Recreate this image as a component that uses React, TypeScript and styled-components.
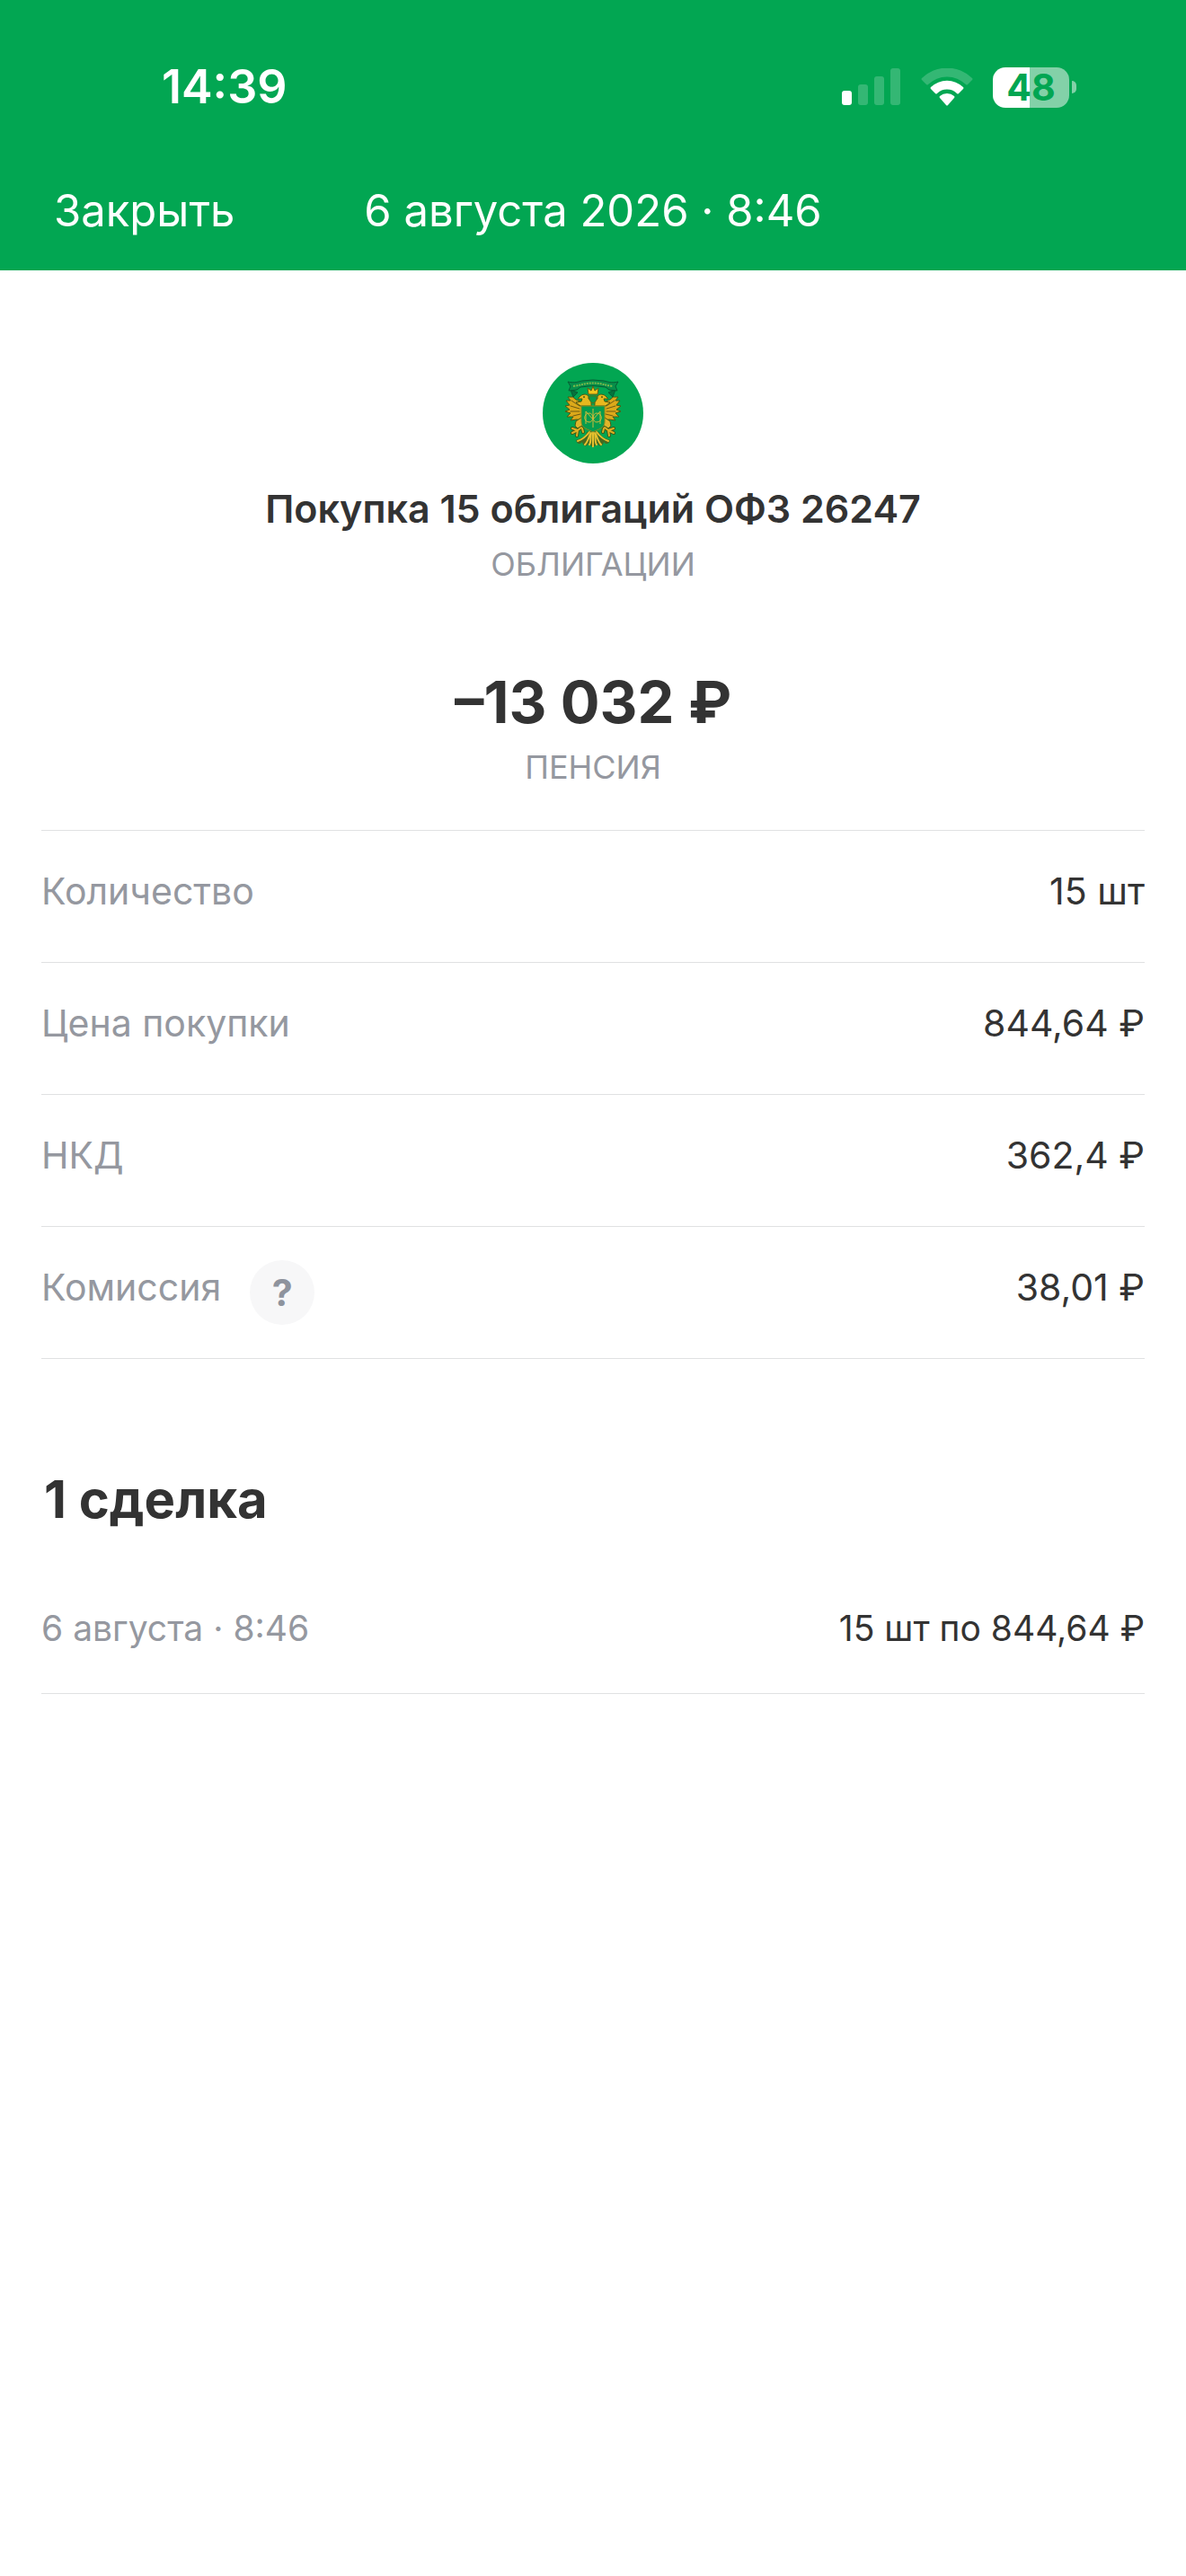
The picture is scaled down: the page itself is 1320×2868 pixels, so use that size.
import React from "react";
import styled, { createGlobalStyle } from "styled-components";

const green = "#02a652";
const ink = "#333333";
const muted = "#9598a0";
const line = "#e0e1e2";

const GlobalStyle = createGlobalStyle`
  * { box-sizing: border-box; }
  body {
    margin: 0;
    background: #ffffff;
    color: ${ink};
    font-family: Inter, "Noto Sans", sans-serif;
  }
`;

const Header = styled.header`
  background: ${green};
  color: #ffffff;
`;

const StatusBar = styled.div`
  display: flex;
  align-items: center;
  justify-content: space-between;
  padding: 72px 122px 0 180px;
`;

const Clock = styled.time`
  font-size: 52px;
  line-height: 50px;
  font-weight: 600;
`;

const StatusIcons = styled.div`
  display: flex;
  align-items: center;
  gap: 22px;
`;

const NavBar = styled.nav`
  display: grid;
  grid-template-columns: 1fr auto 1fr;
  align-items: center;
  padding: 83px 60px 36px;
`;

const CloseButton = styled.button`
  justify-self: start;
  padding: 0;
  border: 0;
  background: none;
  color: inherit;
  font: inherit;
  font-size: 49px;
  line-height: 60px;
  cursor: pointer;
`;

const NavTitle = styled.span`
  font-size: 49px;
  line-height: 60px;
`;

const Content = styled.main`
  padding: 103px 46px 0;
`;

const Summary = styled.section`
  display: flex;
  flex-direction: column;
  align-items: center;
  text-align: center;
  padding-bottom: 48px;
`;

const OperationName = styled.h1`
  margin: 24px 0 14px;
  font-size: 43px;
  line-height: 52px;
  font-weight: 600;
`;

const Caption = styled.p`
  margin: 0;
  color: ${muted};
  font-size: 36px;
  line-height: 44px;
`;

const Amount = styled.p`
  margin: 92px 0 10px;
  font-size: 65px;
  line-height: 80px;
  font-weight: 700;
`;

const Details = styled.dl`
  margin: 0;
  border-bottom: 1px solid ${line};
`;

const DetailRow = styled.div`
  display: flex;
  justify-content: space-between;
  padding: 37px 0 49px;
  border-top: 1px solid ${line};
  font-size: 41px;
  line-height: 60px;
`;

const Term = styled.dt`
  display: flex;
  align-items: flex-start;
  gap: 32px;
  color: ${muted};
`;

const Value = styled.dd`
  margin: 0;
`;

const HelpButton = styled.button`
  width: 72px;
  height: 72px;
  margin-bottom: -12px;
  padding: 0;
  border: 0;
  border-radius: 50%;
  background: #f7f7f8;
  color: #8e939d;
  font: inherit;
  font-size: 41px;
  line-height: 72px;
  font-weight: 700;
  cursor: pointer;
`;

const DealsTitle = styled.h2`
  margin: 120px 0 0;
  padding-left: 3px;
  font-size: 58px;
  line-height: 72px;
  font-weight: 700;
`;

const DealList = styled.ul`
  margin: 36px 0 0;
  padding: 48px 0 0;
  list-style: none;
`;

const DealRow = styled.li`
  display: flex;
  justify-content: space-between;
  padding-bottom: 48px;
  border-bottom: 1px solid ${line};
  font-size: 39px;
  line-height: 48px;
`;

const DealDate = styled.time`
  color: ${muted};
`;

const BatteryFrame = styled.div`
  display: flex;
  align-items: center;
  gap: 3px;
`;

const BatteryBody = styled.div`
  width: 85px;
  height: 45px;
  border-radius: 14px;
  background: linear-gradient(90deg, #ffffff 48%, #83d1a8 48%);
  color: ${green};
  font-size: 41px;
  line-height: 45px;
  font-weight: 700;
  text-align: center;
`;

const BatteryTip = styled.div`
  width: 5px;
  height: 14px;
  border-radius: 0 7px 7px 0;
  background: #83d1a8;
`;

function Signal() {
  return (
    <svg width="66" height="42" viewBox="0 0 66 42" aria-hidden="true">
      <rect x="0" y="25" width="11" height="16" rx="3" fill="#fff" />
      <g fill="#fff" fillOpacity="0.2">
        <rect x="18" y="18" width="11" height="23" rx="3" />
        <rect x="36" y="9" width="11" height="32" rx="3" />
        <rect x="54" y="0" width="11" height="41" rx="3" />
      </g>
    </svg>
  );
}

function Wifi() {
  return (
    <svg width="58" height="42" viewBox="0 0 58 42" aria-hidden="true">
      <path
        d="M1 11Q0 12 1 13L6 18Q7 19 8 18A30 30 0 0 1 50 18Q51 19 52 18L57 13Q58 12 57 11A40 40 0 0 0 1 11Z"
        fill="#fff"
        fillOpacity="0.2"
      />
      <path
        d="M11 21Q10 22 11 23L16 28Q17 29 18 28A16 16 0 0 1 40 28Q41 29 42 28L47 23Q48 22 47 21A26 26 0 0 0 11 21Z"
        fill="#fff"
      />
      <path
        d="M21 31Q20 32 21 33L28 41Q29 42 30 41L37 33Q38 32 37 31A12 12 0 0 0 21 31Z"
        fill="#fff"
      />
    </svg>
  );
}

function EagleHalf() {
  return (
    <g strokeLinecap="round" strokeLinejoin="round">
      <path
        d="M-11 13C-16 9 -20 10 -22 6L-28 6L-25 10L-30 10L-26 15L-31 16L-26 20L-31 22L-25 24L-29 28L-22 28L-25 32L-18 31L-13 32Z"
        fill="#dca91a"
        stroke="#4c5b12"
        strokeWidth="1"
      />
      <path
        d="M-24 10L-15 16M-25 16L-15 19M-25 22L-15 22M-22 27L-14 25"
        stroke="#6d5a12"
        strokeWidth="1"
      />
      <path
        d="M-13 29L-19 33L-20 38L-17 41L-12 39L-11 32Z"
        fill="#e0b52a"
        stroke="#4c5b12"
        strokeWidth="1"
      />
      <path
        d="M-13 40L-17 43L-23 41M-17 43L-23 46M-17 43L-18 49M-12 41L-11 45"
        stroke="#3d5a18"
        strokeWidth="4"
      />
      <path
        d="M-13 40L-17 43L-23 41M-17 43L-23 46M-17 43L-18 49M-12 41L-11 45"
        stroke="#dcb022"
        strokeWidth="2"
      />
      <path
        d="M-2 14V10L-5 8L-5 5C-8 2 -12 3 -14 5L-17 8L-12 8L-13 11L-19 12L-14 16H-2Z"
        fill="#e8b81e"
        stroke="#4c5b12"
        strokeWidth="1"
      />
      <circle cx="-10" cy="6" r="1" fill="#4c5b12" />
      <path
        d="M0 43L-7 45C-8 50 -13 52 -19 54C-18 59 -14 59 -12 56C-11 61 -7 62 -5 58L0 62Z"
        fill="#456a20"
      />
      <path
        d="M-4 45C-7 49 -11 53 -17 55M-3 47C-5 52 -6 56 -9 59M-2 46C-3 51 -2 57 -4 59M0 45V61"
        stroke="#e6c02e"
        strokeWidth="2"
      />
    </g>
  );
}

function Emblem() {
  return (
    <svg width="112" height="112" viewBox="-56 -56 112 112" role="img" aria-label="ОФЗ">
      <circle r="56" fill={green} />
      <g transform="translate(0 -24)" fill="none">
        <EagleHalf />
        <g transform="scale(-1 1)">
          <EagleHalf />
        </g>
        <path
          d="M-25 -2L-22 6L-17 1ZM25 -2L22 6L17 1Z"
          fill="#05733d"
          stroke="#075c34"
          strokeWidth="1"
        />
        <path
          d="M-28 -11C-20 -9 -17 -11 -12 -12Q0 -14 12 -12C17 -11 20 -9 28 -11L25 -6L27 -1L18 -2L14 -5Q0 -8 -14 -5L-18 -2L-27 -1L-25 -6Z"
          fill="#078f4a"
          stroke="#075c34"
          strokeWidth="1"
        />
        <path
          d="M-22 -6Q-16 -7 -12 -8Q0 -11 12 -8Q16 -7 22 -6"
          stroke="#7cba4c"
          strokeWidth="2"
          strokeDasharray="2 1"
        />
        <path
          d="M-5 3L-6 -4L-2 -1L0 -6L2 -1L6 -4L5 3Z"
          fill="#f1c51c"
          stroke="#675d12"
          strokeWidth="1"
        />
        <path d="M-4 5H4V9Q3 12 0 13Q-3 12 -4 9Z" fill="#059b4d" stroke="#5b6c18" strokeWidth="1" />
        <path
          d="M-13 16H13V34C13 41 5 42 0 45C-5 42 -13 41 -13 34Z"
          fill="#059c4e"
          stroke="#8c8a1e"
          strokeWidth="1"
        />
        <path
          d="M-8 36V22L0 31L8 22V36M0 19V40M-4 24C-11 24 -11 34 -4 34C1 34 1 24 -4 24ZM4 24C11 24 11 34 4 34C-1 34 -1 24 4 24Z"
          stroke="#cdbb3a"
          strokeWidth="1"
        />
      </g>
    </svg>
  );
}

const details = [
  { label: "Количество", value: "15 шт" },
  { label: "Цена покупки", value: "844,64 ₽" },
  { label: "НКД", value: "362,4 ₽" },
  { label: "Комиссия", value: "38,01 ₽", help: true },
];

const deals = [{ date: "6 августа · 8:46", text: "15 шт по 844,64 ₽" }];

export default function App() {
  return (
    <>
      <GlobalStyle />
      <Header>
        <StatusBar>
          <Clock>14:39</Clock>
          <StatusIcons>
            <Signal />
            <Wifi />
            <BatteryFrame>
              <BatteryBody>48</BatteryBody>
              <BatteryTip />
            </BatteryFrame>
          </StatusIcons>
        </StatusBar>
        <NavBar>
          <CloseButton type="button">Закрыть</CloseButton>
          <NavTitle>6 августа 2026 · 8:46</NavTitle>
        </NavBar>
      </Header>
      <Content>
        <Summary>
          <Emblem />
          <OperationName>Покупка 15 облигаций ОФЗ 26247</OperationName>
          <Caption>ОБЛИГАЦИИ</Caption>
          <Amount>–13 032 ₽</Amount>
          <Caption>ПЕНСИЯ</Caption>
        </Summary>
        <Details>
          {details.map((item) => (
            <DetailRow key={item.label}>
              <Term>
                {item.label}
                {item.help && (
                  <HelpButton type="button" aria-label="О комиссии">
                    ?
                  </HelpButton>
                )}
              </Term>
              <Value>{item.value}</Value>
            </DetailRow>
          ))}
        </Details>
        <DealsTitle>1 сделка</DealsTitle>
        <DealList>
          {deals.map((deal) => (
            <DealRow key={deal.date}>
              <DealDate>{deal.date}</DealDate>
              <span>{deal.text}</span>
            </DealRow>
          ))}
        </DealList>
      </Content>
    </>
  );
}
